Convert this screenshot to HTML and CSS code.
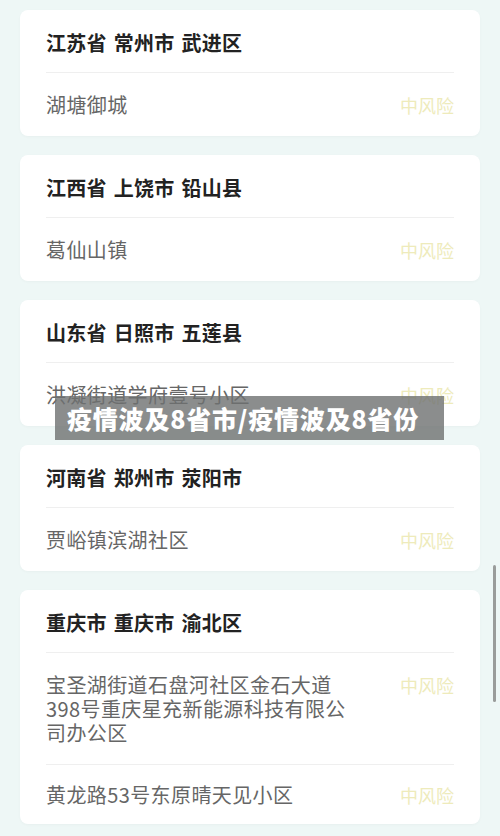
FILE: index.html
```html
<!DOCTYPE html>
<html lang="zh-CN">
<head>
    <meta charset="UTF-8">
    <meta name="viewport" content="width=device-width, initial-scale=1.0">
    <title>中风险地区</title>
    <link rel="stylesheet" href="styles.css">
</head>
<body>
    <main class="list">
        <div class="card">
            <div class="card-title">江苏省 常州市 武进区</div>
            <div class="row">
                <span class="place">湖塘御城</span>
                <span class="risk">中风险</span>
            </div>
        </div>
        <div class="card">
            <div class="card-title">江西省 上饶市 铅山县</div>
            <div class="row">
                <span class="place">葛仙山镇</span>
                <span class="risk">中风险</span>
            </div>
        </div>
        <div class="card">
            <div class="card-title">山东省 日照市 五莲县</div>
            <div class="row">
                <span class="place">洪凝街道学府壹号小区</span>
                <span class="risk">中风险</span>
            </div>
        </div>
        <div class="card">
            <div class="card-title">河南省 郑州市 荥阳市</div>
            <div class="row">
                <span class="place">贾峪镇滨湖社区</span>
                <span class="risk">中风险</span>
            </div>
        </div>
        <div class="card">
            <div class="card-title">重庆市 重庆市 渝北区</div>
            <div class="row">
                <span class="place">宝圣湖街道石盘河社区金石大道398号重庆星充新能源科技有限公司办公区</span>
                <span class="risk">中风险</span>
            </div>
            <div class="row last">
                <span class="place">黄龙路53号东原晴天见小区</span>
                <span class="risk">中风险</span>
            </div>
        </div>
    </main>
    <div class="caption">疫情波及8省市/疫情波及8省份</div>
    <div class="scrollbar"></div>
</body>
</html>
```

FILE: styles.css
```css
body {
    font-family: "Noto Sans CJK SC", "Noto Sans", sans-serif;
    background-color: #eef7f6;
    color: #222;
    margin: 0;
    padding: 10px 20px;
}
.list {
    display: flex;
    flex-direction: column;
    gap: 19px;
}
.card {
    background-color: white;
    border-radius: 8px;
    padding: 0 26px;
    box-shadow: 0 1px 3px rgba(0, 0, 0, 0.03);
}
.card-title {
    font-size: 20px;
    font-weight: bold;
    line-height: 22px;
    padding: 22px 0 18px;
    letter-spacing: 0.3px;
    word-spacing: 2px;
}
.row {
    display: flex;
    justify-content: space-between;
    align-items: flex-start;
    border-top: 1px solid #efefef;
    padding: 20px 0 19px;
}
.row.last {
    padding: 18px 0 17px;
}
.place {
    font-size: 20px;
    line-height: 24px;
    color: #666;
    max-width: 306px;
    letter-spacing: 0.4px;
}
.risk {
    font-size: 18px;
    line-height: 24px;
    color: #eeebbb;
}
.caption {
    position: absolute;
    left: 55px;
    top: 396px;
    width: 377px;
    height: 44px;
    padding-left: 12px;
    background-color: rgba(110, 113, 112, 0.8);
    color: white;
    font-size: 25px;
    font-weight: 900;
    line-height: 44px;
    letter-spacing: 0.8px;
}
.scrollbar {
    position: absolute;
    right: 4px;
    top: 565px;
    width: 3px;
    height: 137px;
    border-radius: 2px;
    background-color: #9a9c9b;
}
```
